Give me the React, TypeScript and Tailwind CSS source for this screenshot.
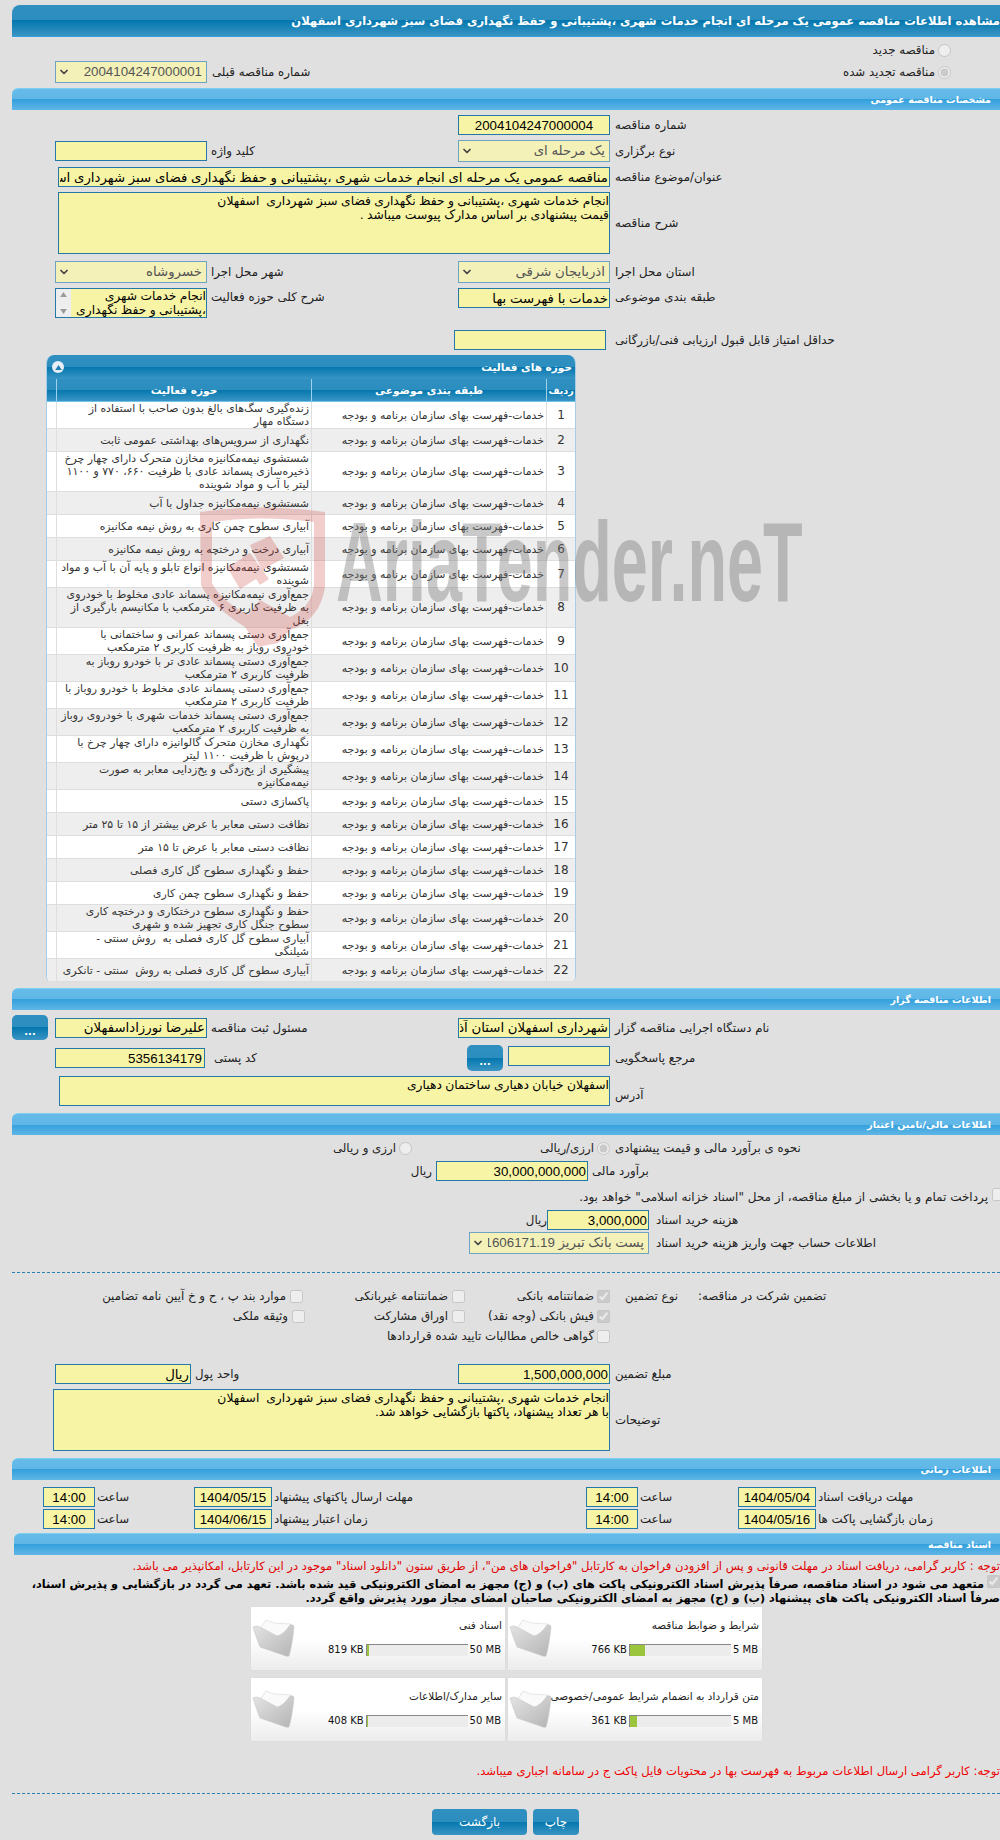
import { ChevronDown } from "lucide-react";

const fieldFont = "[font-family:'Liberation_Sans','DejaVu_Sans',sans-serif]";
const inputCls = `h-[20px] shrink-0 border border-[#2478a8] bg-[#f7f4a5] px-[1px] ${fieldFont} text-[13.3px] leading-[14px] text-black outline-none`;
const selectCls = `h-[22px] w-full appearance-none border border-[#6fa3c4] bg-[#f3f1b8] pl-[18px] pr-[4px] ${fieldFont} text-[13.3px] text-[#555] opacity-100`;
const areaCls = `shrink-0 resize-none border border-[#2478a8] bg-[#f7f4a5] px-[0px] pt-[1px] ${fieldFont} text-[12.3px] leading-[14px] text-black outline-none`;
const titleBar = "bg-[linear-gradient(to_bottom,#2f8fc1_0%,#2c8dbf_50%,#0477ae_50%,#3a95c4_100%)]";

const activities = [
  "زنده‌گیری سگ‌های بالغ بدون صاحب با استفاده از دستگاه مهار",
  "نگهداری از سرویس‌های بهداشتی عمومی ثابت",
  "شستشوی نیمه‌مکانیزه مخازن متحرک دارای چهار چرخ ذخیره‌سازی پسماند عادی با ظرفیت ۶۶۰، ۷۷۰ و ۱۱۰۰ لیتر با آب و مواد شوینده",
  "شستشوی نیمه‌مکانیزه جداول با آب",
  "آبیاری سطوح چمن کاری به روش نیمه مکانیزه",
  "آبیاری درخت و درختچه به روش نیمه مکانیزه",
  "شستشوی نیمه‌مکانیزه انواع تابلو و پایه آن با آب و مواد شوینده",
  "جمع‌آوری نیمه‌مکانیزه پسماند عادی مخلوط با خودروی به ظرفیت کاربری ۶ مترمکعب با مکانیسم بارگیری از بغل",
  "جمع‌آوری دستی پسماند عمرانی و ساختمانی با\nخودروی روباز به ظرفیت کاربری ۲ مترمکعب",
  "جمع‌آوری دستی پسماند عادی تر با خودرو روباز به ظرفیت کاربری ۲ مترمکعب",
  "جمع‌آوری دستی پسماند عادی مخلوط با خودرو روباز با ظرفیت کاربری ۲ مترمکعب",
  "جمع‌آوری دستی پسماند خدمات شهری با خودروی روباز به ظرفیت کاربری ۲ مترمکعب",
  "نگهداری مخازن متحرک گالوانیزه دارای چهار چرخ با درپوش با ظرفیت ۱۱۰۰ لیتر",
  "پیشگیری از یخ‌زدگی و یخ‌زدایی معابر به صورت نیمه‌مکانیزه",
  "پاکسازی دستی",
  "نظافت دستی معابر با عرض بیشتر از ۱۵ تا ۲۵ متر",
  "نظافت دستی معابر با عرض تا ۱۵ متر",
  "حفظ و نگهداری سطوح گل کاری فصلی",
  "حفظ و نگهداری سطوح چمن کاری",
  "حفظ و نگهداری سطوح درختکاری و درختچه کاری سطوح جنگل کاری تجهیز شده و شهری",
  "آبیاری سطوح گل کاری فصلی به  روش سنتی -\nشیلنگی",
  "آبیاری سطوح گل کاری فصلی به روش  سنتی - تانکری",
];

const docs = [
  { title: "شرایط و ضوابط مناقصه", size: "766 KB", max: "5 MB", pct: 15 },
  { title: "اسناد فنی", size: "819 KB", max: "50 MB", pct: 2 },
  { title: "متن قرارداد به انضمام شرایط عمومی/خصوصی", size: "361 KB", max: "5 MB", pct: 7 },
  { title: "سایر مدارک/اطلاعات", size: "408 KB", max: "50 MB", pct: 1 },
];

function Bar({ text, className = "" }: { text: string; className?: string }) {
  return (
    <div className={`flex h-[22px] items-center rounded-tl-[6px] border-t border-[#7dd0f2] bg-[linear-gradient(to_bottom,#66bbe9_0%,#5fb6e6_50%,#34a0dc_50%,#5fb6e6_100%)] pr-[9px] text-[9.5px] font-bold text-white ${className}`}>
      {text}
    </div>
  );
}

function Val({ value, className = "" }: { value: string; className?: string }) {
  return <input readOnly value={value} className={`${inputCls} ${className}`} />;
}

function Sel({ value, className = "" }: { value: string; className?: string }) {
  return (
    <div className={`relative shrink-0 ${className}`}>
      <select disabled value={value} className={selectCls}>
        <option value={value}>{value}</option>
      </select>
      <ChevronDown size={12} strokeWidth={3.5} className="pointer-events-none absolute left-[3px] top-[5px] text-[#444]" />
    </div>
  );
}

function Folder() {
  return (
    <svg viewBox="0 0 45 45" className="h-[45px] w-[45px] shrink-0">
      <defs>
        <linearGradient id="folderFront" x1="0" y1="0" x2="1" y2="1">
          <stop offset="0" stopColor="#e4e4e4" />
          <stop offset="1" stopColor="#b4b4b4" />
        </linearGradient>
      </defs>
      <path d="M9 13 L15 4 L23 7 L40 8 L32 24 L9 16 Z" fill="#fafafa" stroke="#dcdcdc" strokeWidth="0.7" />
      <path d="M2 11 Q5 9 9 11 L26 20 Q32 19 39 9 Q43 8 43 11 Q41 30 38 40 Q36 41 32 39 L9 31 Q5 21 2 11 Z" fill="url(#folderFront)" stroke="#c8c8c8" strokeWidth="0.6" />
    </svg>
  );
}

function DocCard({ doc }: { doc: (typeof docs)[number] }) {
  return (
    <div className="flex h-[63px] bg-[linear-gradient(to_bottom,#ffffff_0%,#ffffff_50%,#ececec_100%)] shadow-[0_0_1px_#ccc]">
      <div className="min-w-0 flex-1 pr-[3px] pt-[11px]">
        <div className="whitespace-nowrap text-[10.5px] leading-[14px] text-[#222]">{doc.title}</div>
        <div dir="ltr" className="mt-[12px] flex items-center justify-end gap-[2px] pr-[1px] text-[10px] leading-[12px] text-[#111]">
          <span>{doc.size}</span>
          <div className="h-[12px] w-[102px] border-t border-l border-[#888] bg-[#ececec]">
            <div className="h-full bg-[#9bc53d]" style={{ width: `${doc.pct}%` }} />
          </div>
          <span>{doc.max}</span>
        </div>
      </div>
      <div className="pt-[9px]">
        <Folder />
      </div>
    </div>
  );
}

function Watermark() {
  return (
    <>
      <svg viewBox="0 0 150 160" className="pointer-events-none absolute left-[190px] top-[495px] h-[160px] w-[150px]">
        <g fill="#c4302b" fillOpacity="0.24">
          <path fillRule="evenodd" d="M10 17 Q72 8 135 17 L135 92 Q130 125 100 135 L88 148 L68 152 L55 132 Q20 110 11 90 Z M22 27 L22 88 Q30 105 58 120 L70 105 L100 122 Q122 112 124 90 L124 27 Q72 20 22 27 Z" />
          <path d="M37 72 L53 63 L66 84 L50 94 Z" />
          <path d="M52 62 L60 58 L79 84 L70 90 Z" />
          <path d="M60 50 L80 41 L94 63 L72 75 Z" />
        </g>
      </svg>
      <div dir="ltr" className="pointer-events-none absolute left-[336px] top-[497px] origin-left scale-x-[.568] whitespace-nowrap text-[114px] font-bold leading-[130px] text-[#777]/40 [font-family:'Liberation_Sans',sans-serif]">
        AriaTender.neT
      </div>
    </>
  );
}

export default function App() {
  return (
    <div dir="rtl" className="relative h-[1840px] w-[1000px] overflow-hidden bg-[#e0e0e0] pt-[5px] text-[11.8px] leading-[14px] text-[#222] [font-family:'DejaVu_Sans',sans-serif]">
      <div className={`ml-[12px] flex h-[32px] items-center overflow-hidden whitespace-nowrap rounded-tl-[8px] border-b border-[#3aa0e4] ${titleBar} text-[11.5px] font-bold text-white`}>
        مشاهده اطلاعات مناقصه عمومی یک مرحله ای انجام خدمات شهری ،پشتیبانی و حفظ نگهداری فضای سبز شهرداری اسفهلان
      </div>

      <div className="mt-[6px] flex h-[14px] items-center gap-[3px] pr-[49px]">
        <input type="radio" disabled className="m-0 h-[13px] w-[13px]" />
        <span>مناقصه جدید</span>
      </div>
      <div className="mt-[4px] flex h-[22px] items-center">
        <div className="flex w-[793px] items-center justify-between pl-[5px] pr-[49px]">
          <div className="flex items-center gap-[3px]">
            <input type="radio" disabled defaultChecked className="m-0 h-[13px] w-[13px]" />
            <span>مناقصه تجدید شده</span>
          </div>
          <span>شماره مناقصه قبلی</span>
        </div>
        <Sel value="2004104247000001" className="w-[152px]" />
      </div>

      <Bar text="مشخصات مناقصه عمومی" className="ml-[12px] mt-[5px]" />

      <div className="mt-[5px] flex items-center">
        <label className="w-[390px] pl-[5px] text-left">شماره مناقصه</label>
        <Val value="2004104247000004" className="w-[152px] text-center" />
      </div>
      <div className="mt-[5px] flex h-[22px] items-center">
        <label className="w-[390px] pl-[5px] text-left">نوع برگزاری</label>
        <Sel value="یک مرحله ای" className="w-[152px]" />
        <label className="w-[251px] pl-[4px] text-left">کلید واژه</label>
        <Val value="" className="w-[152px]" />
      </div>
      <div className="mt-[5px] flex items-center">
        <label className="w-[390px] pl-[5px] text-left">عنوان/موضوع مناقصه</label>
        <Val value="مناقصه عمومی یک مرحله ای انجام خدمات شهری ،پشتیبانی و حفظ نگهداری فضای سبز شهرداری اسفهلان" className="w-[552px]" />
      </div>
      <div className="mt-[5px] flex items-center">
        <label className="w-[390px] pl-[5px] text-left">شرح مناقصه</label>
        <textarea readOnly value={"انجام خدمات شهری ،پشتیبانی و حفظ نگهداری فضای سبز شهرداری  اسفهلان\nقیمت پیشنهادی بر اساس مدارک پیوست میباشد ."} className={`${areaCls} h-[62px] w-[552px]`} />
      </div>
      <div className="mt-[7px] flex h-[22px] items-center">
        <label className="w-[390px] pl-[5px] text-left">استان محل اجرا</label>
        <Sel value="آذربایجان شرقی" className="w-[152px]" />
        <label className="w-[251px] pl-[4px] text-left">شهر محل اجرا</label>
        <Sel value="خسروشاه" className="w-[152px]" />
      </div>
      <div className="mt-[5px] flex h-[30px] items-start">
        <label className="mt-[2px] w-[390px] pl-[5px] text-left">طبقه بندی موضوعی</label>
        <Val value="خدمات با فهرست بها" className="w-[152px]" />
        <label className="mt-[2px] w-[251px] pl-[4px] text-left">شرح کلی حوزه فعالیت</label>
        <div className="flex h-[30px] w-[152px] shrink-0 overflow-hidden border border-[#2478a8]">
          <div className={`min-w-0 flex-1 overflow-hidden bg-[#f7f4a5] ${fieldFont} text-[12.3px] leading-[14px] text-black`}>انجام خدمات شهری ،پشتیبانی و حفظ نگهداری</div>
          <div className="flex w-[15px] flex-col items-center justify-between bg-[#eeeeee] py-[3px]">
            <svg viewBox="0 0 8 6" className="h-[5px] w-[7px]"><path d="M4 0 L8 6 L0 6 Z" fill="#9a9a9a" /></svg>
            <svg viewBox="0 0 8 6" className="h-[5px] w-[7px]"><path d="M4 6 L8 0 L0 0 Z" fill="#9a9a9a" /></svg>
          </div>
        </div>
      </div>
      <div className="mt-[12px] flex items-center">
        <label className="w-[394px] pl-[9px] text-left">حداقل امتیاز قابل قبول ارزیابی فنی/بازرگانی</label>
        <Val value="" className="w-[152px]" />
      </div>

      <div className="ml-[46px] mr-[424px] mt-[5px] overflow-hidden rounded-t-[8px] rounded-b-[6px] border-x border-[#a5cde8] bg-white text-[10.9px] leading-[13px] text-[#333]">
        <div className={`flex h-[24px] items-center justify-between ${titleBar} pl-[5px] pr-[3px] text-[10.5px] font-bold text-white`}>
          <span>حوزه های فعالیت</span>
          <span className="flex h-[12px] w-[12px] items-center justify-center rounded-full bg-[#e8eef6]">
            <svg viewBox="0 0 8 6" className="h-[5px] w-[7px]"><path d="M4 0 L8 6 L0 6 Z" fill="#1e7fb3" /></svg>
          </span>
        </div>
        <div className={`flex h-[23px] border-b border-[#6fc2ea] ${titleBar} text-[10.6px] font-bold text-white`}>
          <div className="flex w-[29px] items-center justify-center whitespace-nowrap border-l border-[#9fd2ea] text-[9.5px]">ردیف</div>
          <div className="flex w-[235px] items-center justify-center border-l border-[#9fd2ea]">طبقه بندی موضوعی</div>
          <div className="flex w-[255px] items-center justify-center border-l border-[#9fd2ea]">حوزه فعالیت</div>
        </div>
        {activities.map((name, i) => (
          <div key={i} className={`flex min-h-[23px] border-b border-[#dedede] ${i % 2 === 0 ? "bg-white" : "bg-[#eeeeee]"}`}>
            <div className="flex w-[29px] items-center justify-center border-l border-[#dedede] text-[12px]">{i + 1}</div>
            <div className="flex w-[235px] items-center whitespace-nowrap border-l border-[#dedede] pr-[2px]">خدمات-فهرست بهای سازمان برنامه و بودجه</div>
            <div className="flex w-[255px] items-center whitespace-pre-wrap border-l border-[#dedede] pl-[2px] pr-[2px]"><span>{name}</span></div>
          </div>
        ))}
      </div>

      <Bar text="اطلاعات مناقصه گزار" className="ml-[12px] mt-[6px]" />
      <div className="mt-[5px] flex h-[25px] items-center">
        <label className="w-[390px] pl-[5px] text-left">نام دستگاه اجرایی مناقصه گزار</label>
        <Val value="شهرداری اسفهلان استان آذربایجان شرقی" className="w-[152px]" />
        <label className="w-[251px] pl-[4px] text-left">مسئول ثبت مناقصه</label>
        <Val value="علیرضا نورزاداسفهلان" className="w-[152px]" />
        <button className={`mr-[7px] h-[25px] w-[36px] rounded-[5px] ${titleBar} pt-[8px] text-[10px] font-bold text-white`}>...</button>
      </div>
      <div className="mt-[5px] flex h-[26px] items-center">
        <label className="w-[390px] pl-[5px] text-left">مرجع پاسخگویی</label>
        <Val value="" className="mb-[4px] w-[102px]" />
        <button className={`mr-[5px] h-[26px] w-[36px] rounded-[5px] ${titleBar} pt-[8px] text-[10px] font-bold text-white`}>...</button>
        <label className="w-[262px] pl-[9px] text-left">کد پستی</label>
        <Val value="5356134179" className="w-[150px] pl-[2px] pr-[2px]" />
      </div>
      <div className="mt-[5px] flex items-center">
        <label className="mt-[8px] w-[390px] pl-[5px] text-left">آدرس</label>
        <textarea readOnly value="اسفهلان خیابان دهیاری ساختمان دهیاری" className={`${areaCls} h-[30px] w-[551px]`} />
      </div>

      <Bar text="اطلاعات مالی/تامین اعتبار" className="ml-[12px] mt-[7px]" />
      <div className="mt-[6px] flex h-[14px] items-center">
        <label className="w-[390px] pl-[5px] text-left">نحوه ی برآورد مالی و قیمت پیشنهادی</label>
        <div className="flex w-[198px] items-center gap-[3px]">
          <input type="radio" disabled defaultChecked className="m-0 h-[13px] w-[13px]" />
          <span>ارزی/ریالی</span>
        </div>
        <div className="flex items-center gap-[3px]">
          <input type="radio" disabled className="m-0 h-[13px] w-[13px]" />
          <span>ارزی و ریالی</span>
        </div>
      </div>
      <div className="mt-[6px] flex items-center">
        <label className="w-[412px] pl-[4px] text-left">برآورد مالی</label>
        <Val value="30,000,000,000" className="w-[152px]" />
        <span className="mr-[4px]">ریال</span>
      </div>
      <div className="mt-[7px] flex h-[16px] items-start">
        <input type="checkbox" disabled className="m-0 -mr-[5px] h-[13px] w-[13px] shrink-0" />
        <span className="mr-[4px] mt-[2px] text-[12px]">پرداخت تمام و یا بخشی از مبلغ مناقصه، از محل "اسناد خزانه اسلامی" خواهد بود.</span>
      </div>
      <div className="mt-[6px] flex items-center">
        <label className="w-[351px] pl-[7px] text-left">هزینه خرید اسناد</label>
        <Val value="3,000,000" className="w-[102px]" />
        <span>ریال</span>
      </div>
      <div className="mt-[2px] flex h-[22px] items-center">
        <label className="w-[351px] pl-[7px] text-left">اطلاعات حساب جهت واریز هزینه خرید اسناد</label>
        <Sel value="پست بانک تبریز 1606171.19" className="w-[180px]" />
      </div>

      <div className="ml-[12px] mt-[18px] border-t border-dashed border-[#2a80b0]" />

      <div className="mt-[13px] flex h-[20px] items-center">
        <span className="w-[302px] text-left">تضمین شرکت در مناقصه:</span>
        <span className="w-[88px] pl-[15px] text-left">نوع تضمین</span>
        <div className="flex w-[145px] items-center gap-[3px]"><input type="checkbox" disabled defaultChecked className="m-0 h-[13px] w-[13px]" /><span>ضمانتنامه بانکی</span></div>
        <div className="flex w-[162px] items-center gap-[4px]"><input type="checkbox" disabled className="m-0 h-[13px] w-[13px]" /><span>ضمانتنامه غیربانکی</span></div>
        <div className="flex items-center gap-[4px]"><input type="checkbox" disabled className="m-0 h-[13px] w-[13px]" /><span>موارد بند پ ، ح و خ آیین نامه تضامین</span></div>
      </div>
      <div className="flex h-[20px] items-center pr-[390px]">
        <div className="flex w-[145px] items-center gap-[3px]"><input type="checkbox" disabled defaultChecked className="m-0 h-[13px] w-[13px]" /><span>فیش بانکی (وجه نقد)</span></div>
        <div className="flex w-[160px] items-center gap-[4px]"><input type="checkbox" disabled className="m-0 h-[13px] w-[13px]" /><span>اوراق مشارکت</span></div>
        <div className="flex items-center gap-[4px]"><input type="checkbox" disabled className="m-0 h-[13px] w-[13px]" /><span>وثیقه ملکی</span></div>
      </div>
      <div className="flex h-[20px] items-center gap-[3px] pr-[390px]">
        <input type="checkbox" disabled className="m-0 h-[13px] w-[13px]" />
        <span>گواهی خالص مطالبات تایید شده قراردادها</span>
      </div>

      <div className="mt-[18px] flex items-center">
        <label className="w-[390px] pl-[5px] text-left">مبلغ تضمین</label>
        <Val value="1,500,000,000" className="w-[152px]" />
        <label className="w-[267px] pl-[4px] text-left">واحد پول</label>
        <Val value="ریال" className="w-[136px]" />
      </div>
      <div className="mt-[5px] flex items-center">
        <label className="w-[390px] pl-[5px] text-left">توضیحات</label>
        <textarea readOnly value={"انجام خدمات شهری ،پشتیبانی و حفظ نگهداری فضای سبز شهرداری  اسفهلان\nبا هر تعداد پیشنهاد، پاکتها بازگشایی خواهد شد."} className={`${areaCls} h-[62px] w-[557px]`} />
      </div>

      <Bar text="اطلاعات زمانی" className="ml-[12px] mt-[7px]" />
      <div className="mt-[7px] flex items-center">
        <label className="w-[184px] pl-[2px] text-left">مهلت دریافت اسناد</label>
        <Val value="1404/05/04" className="w-[78px] text-center" />
        <label className="w-[100px] pl-[2px] text-left">ساعت</label>
        <Val value="14:00" className="w-[52px] text-center" />
        <label className="w-[314px] pl-[2px] text-left">مهلت ارسال پاکتهای پیشنهاد</label>
        <Val value="1404/05/15" className="w-[78px] text-center" />
        <label className="w-[99px] pl-[2px] text-left">ساعت</label>
        <Val value="14:00" className="w-[52px] text-center" />
      </div>
      <div className="mt-[2px] flex items-center">
        <label className="w-[184px] pl-[2px] text-left">زمان بازگشایی پاکت ها</label>
        <Val value="1404/05/16" className="w-[78px] text-center" />
        <label className="w-[100px] pl-[2px] text-left">ساعت</label>
        <Val value="14:00" className="w-[52px] text-center" />
        <label className="w-[314px] pl-[2px] text-left">زمان اعتبار پیشنهاد</label>
        <Val value="1404/06/15" className="w-[78px] text-center" />
        <label className="w-[99px] pl-[2px] text-left">ساعت</label>
        <Val value="14:00" className="w-[52px] text-center" />
      </div>

      <Bar text="اسناد مناقصه" className="ml-[14px] mt-[4px]" />
      <div className="mt-[4px] h-[15px] whitespace-nowrap text-[11.6px] leading-[15px] text-[#e00000]">
        توجه : کاربر گرامی، دریافت اسناد در مهلت قانونی و پس از افزودن فراخوان به کارتابل "فراخوان های من"، از طریق ستون "دانلود اسناد" موجود در این کارتابل، امکانپذیر می باشد.
      </div>
      <div className="mt-[1px] h-[28px] whitespace-nowrap text-[11.3px] font-bold leading-[14px] text-black">
        <input type="checkbox" disabled defaultChecked className="mb-[-2px] ml-[3px] inline-block h-[13px] w-[13px]" />
        متعهد می شود در اسناد مناقصه، صرفاً پذیرش اسناد الکترونیکی پاکت های (ب) و (ج) مجهز به امضای الکترونیکی قید شده باشد. تعهد می گردد در بازگشایی و پذیرش اسناد،
        <br />
        صرفاً اسناد الکترونیکی پاکت های پیشنهاد (ب) و (ج) مجهز به امضای الکترونیکی صاحبان امضای مجاز مورد پذیرش واقع گردد.
      </div>

      <div className="mr-[238px] mt-[4px] grid w-[511px] grid-cols-[254px_254px] gap-x-[3px] gap-y-[8px]">
        {docs.map((d) => (
          <DocCard key={d.title} doc={d} />
        ))}
      </div>

      <div className="mt-[23px] h-[15px] whitespace-nowrap text-[11.6px] leading-[15px] text-[#f00000]">
        توجه: کاربر گرامی ارسال اطلاعات مربوط به فهرست بها در محتویات فایل پاکت ج در سامانه اجباری میباشد.
      </div>
      <div className="ml-[12px] mt-[14px] border-t border-dashed border-[#2a80b0]" />
      <div className="mr-[421px] mt-[15px] flex gap-[6px]">
        <button className={`h-[26px] w-[46px] rounded-[4px] ${titleBar} text-[12px] text-white`}>چاپ</button>
        <button className={`h-[26px] w-[95px] rounded-[4px] ${titleBar} text-[12px] text-white`}>بازگشت</button>
      </div>

      <Watermark />
    </div>
  );
}
